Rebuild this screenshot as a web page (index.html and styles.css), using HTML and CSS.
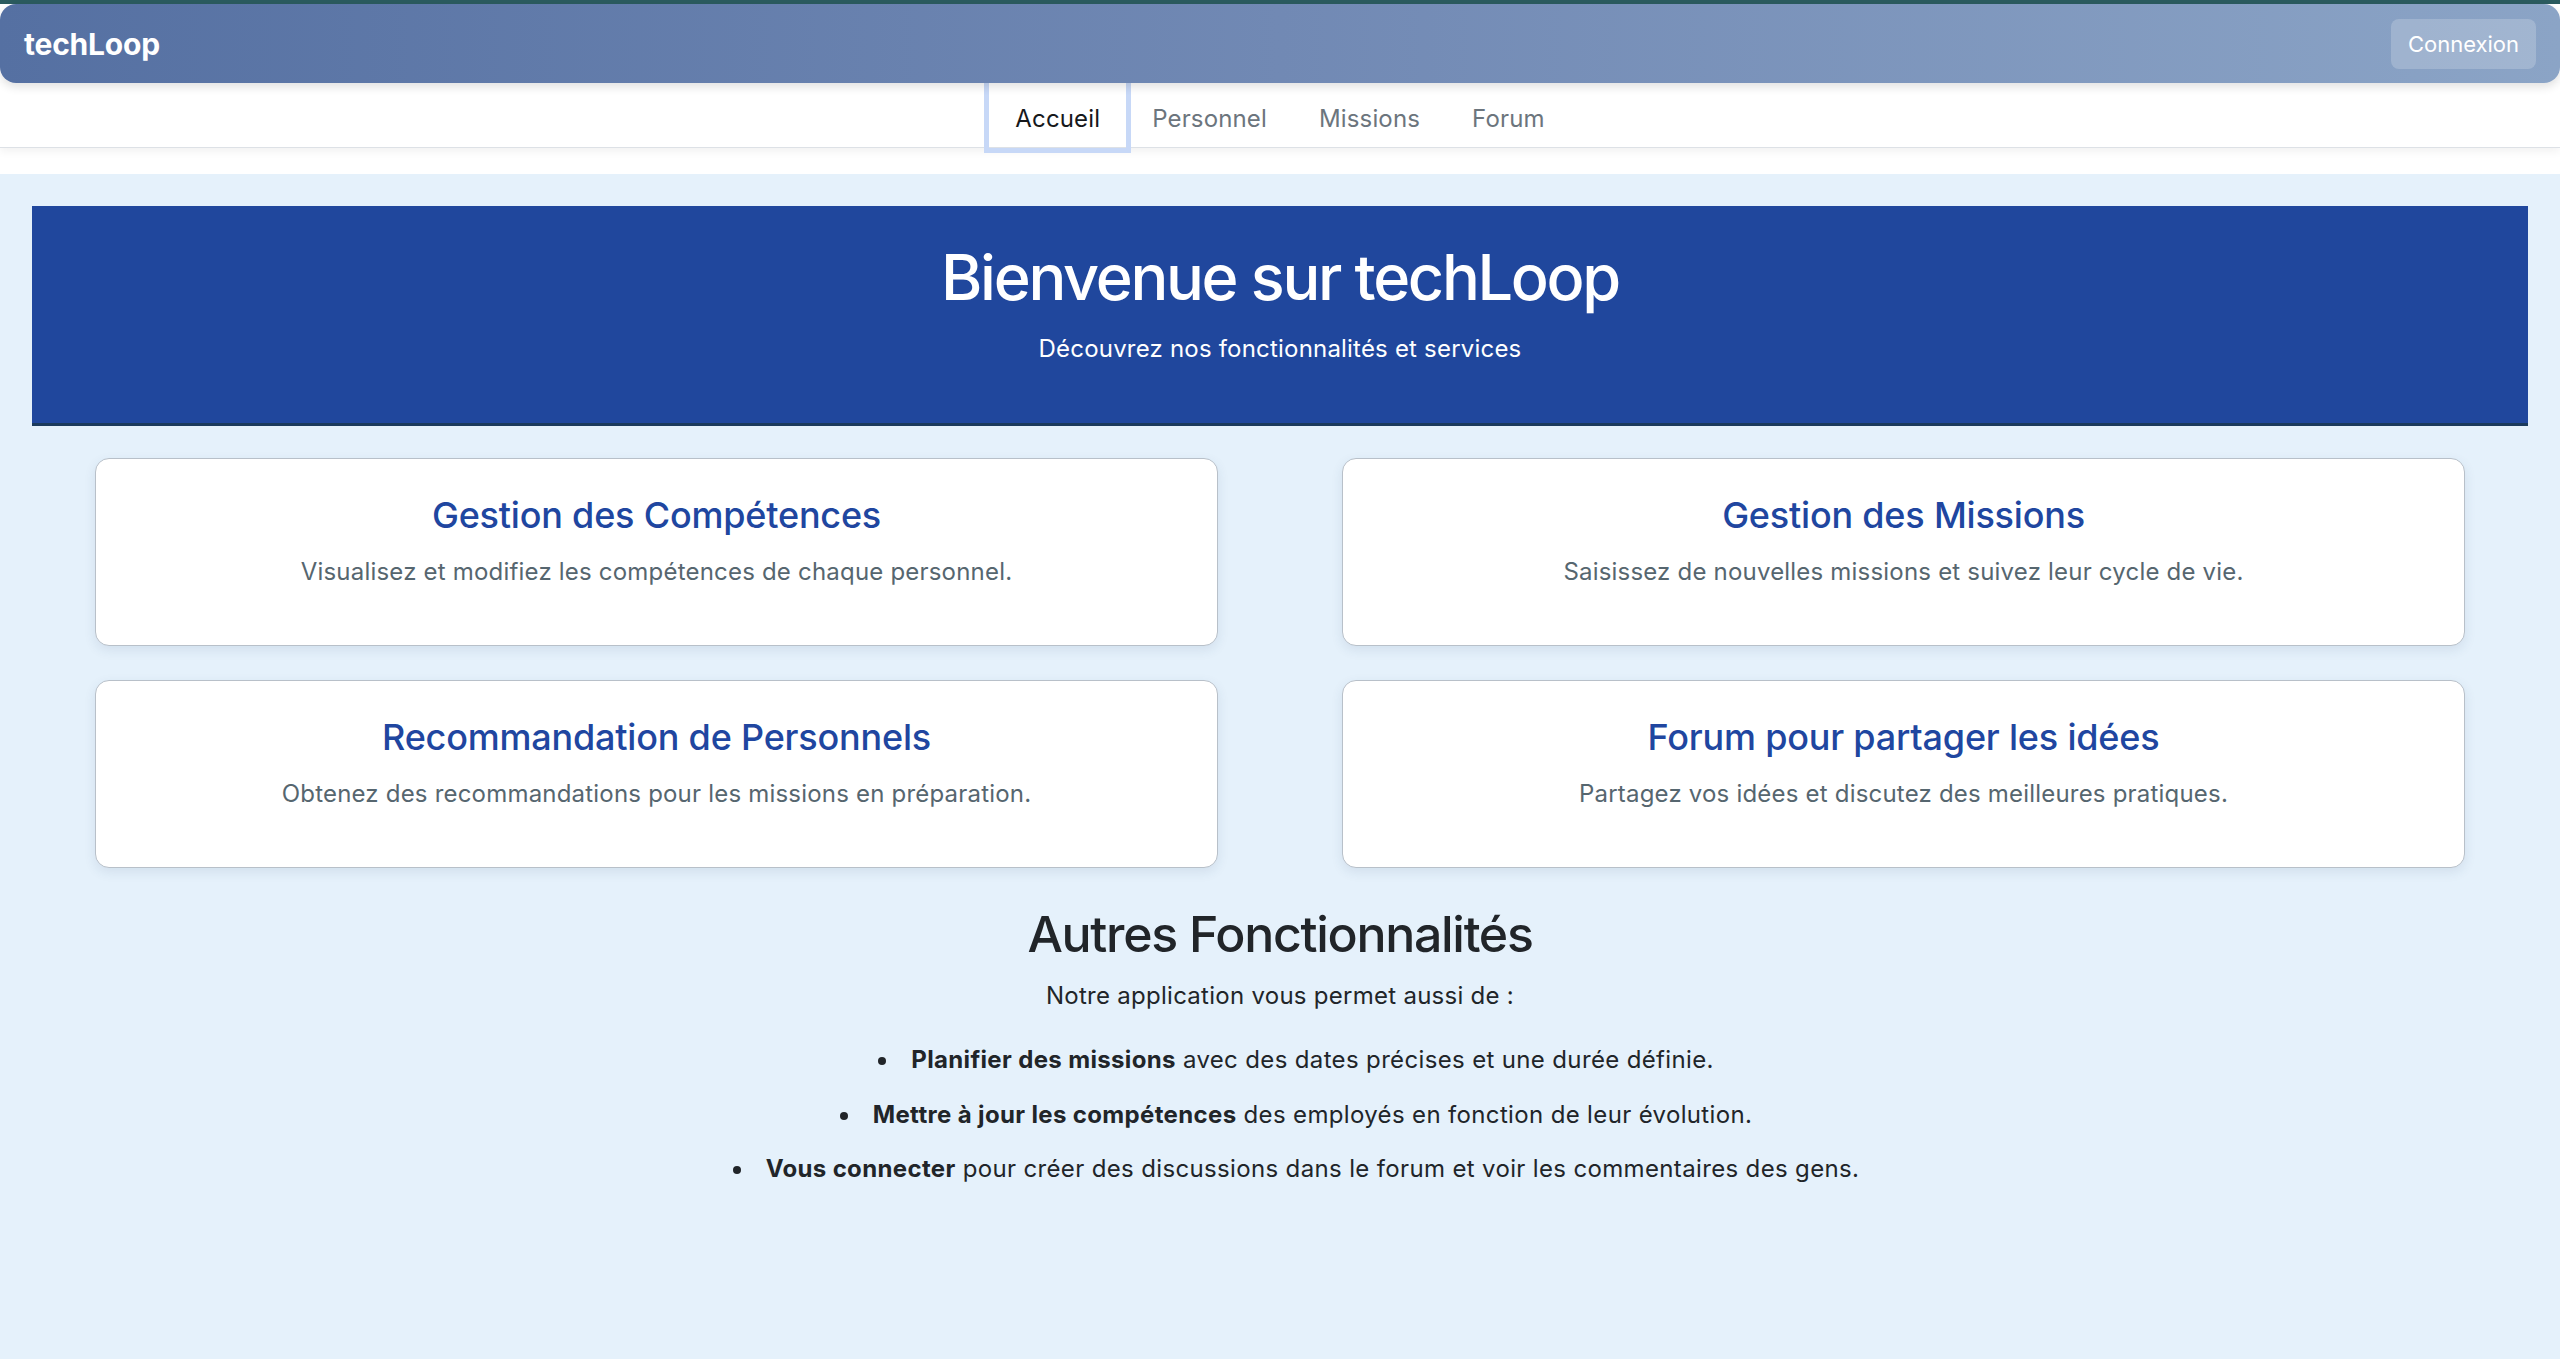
FILE: index.html
```html
<!DOCTYPE html>
<html lang="fr">
<head>
<meta charset="utf-8">
<title>techLoop</title>
<link rel="stylesheet" href="styles.css">
</head>
<body>
<div class="topline"></div>
<header class="navbar">
  <span class="brand">techLoop</span>
  <button class="login">Connexion</button>
</header>
<nav class="tabs">
  <a class="tab active" href="#">Accueil</a>
  <a class="tab" href="#">Personnel</a>
  <a class="tab" href="#">Missions</a>
  <a class="tab" href="#">Forum</a>
</nav>
<main class="main">
  <section class="hero">
    <h1 class="hero-title">Bienvenue sur techLoop</h1>
    <p class="hero-sub">Découvrez nos fonctionnalités et services</p>
  </section>
  <section class="cards">
    <div class="card">
      <h3 class="card-title">Gestion des Compétences</h3>
      <p class="card-text">Visualisez et modifiez les compétences de chaque personnel.</p>
    </div>
    <div class="card">
      <h3 class="card-title">Gestion des Missions</h3>
      <p class="card-text">Saisissez de nouvelles missions et suivez leur cycle de vie.</p>
    </div>
    <div class="card">
      <h3 class="card-title">Recommandation de Personnels</h3>
      <p class="card-text">Obtenez des recommandations pour les missions en préparation.</p>
    </div>
    <div class="card">
      <h3 class="card-title">Forum pour partager les idées</h3>
      <p class="card-text">Partagez vos idées et discutez des meilleures pratiques.</p>
    </div>
  </section>
  <section class="others">
    <h2 class="others-title">Autres Fonctionnalités</h2>
    <p class="others-intro">Notre application vous permet aussi de :</p>
    <ul class="others-list">
      <li><strong>Planifier des missions</strong> avec des dates précises et une durée définie.</li>
      <li><strong>Mettre à jour les compétences</strong> des employés en fonction de leur évolution.</li>
      <li><strong>Vous connecter</strong> pour créer des discussions dans le forum et voir les commentaires des gens.</li>
    </ul>
  </section>
</main>
</body>
</html>
```

FILE: styles.css
```css
* { box-sizing: border-box; }
html, body {
  margin: 0;
  padding: 0;
  background: #ffffff;
  font-family: Inter, "Noto Sans", "DejaVu Sans", sans-serif;
  color: #212529;
}
.topline {
  height: 4px;
  background: #2b5b5f;
}
.navbar {
  position: relative;
  z-index: 2;
  height: 79px;
  display: flex;
  align-items: center;
  justify-content: space-between;
  padding: 0 24px;
  border-radius: 16px;
  background: linear-gradient(90deg, #5570a2 0%, #7189b4 50%, #8ba4c6 100%);
  box-shadow: 0 4px 10px rgba(0, 0, 0, 0.12);
}
.brand {
  color: #ffffff;
  font-size: 30px;
  font-weight: 700;
  letter-spacing: -0.2px;
}
.login {
  height: 50px;
  padding: 0 17px;
  border: none;
  border-radius: 8px;
  background: rgba(255, 255, 255, 0.2);
  color: #ffffff;
  font-family: inherit;
  font-size: 22px;
}
.tabs {
  position: relative;
  z-index: 1;
  height: 65px;
  display: flex;
  justify-content: center;
  background: #ffffff;
  border-bottom: 1px solid #dde1e6;
  box-shadow: 0 4px 8px rgba(0, 0, 0, 0.05);
}
.tab {
  display: flex;
  align-items: center;
  height: 65px;
  padding: 5px 26px 0;
  font-size: 24px;
  color: #6c757d;
  text-decoration: none;
  letter-spacing: 0.15px;
}
.tab.active {
  color: #16181b;
  box-shadow: 0 0 0 5px #c7d8f7;
}
.main {
  margin-top: 26px;
  background: #e5f1fb;
  padding: 32px;
  min-height: calc(100vh - 175px);
}
.hero {
  height: 220px;
  padding: 34px 16px 0;
  background: #20479d;
  border-bottom: 3px solid #1b3a5c;
  text-align: center;
  color: #ffffff;
}
.hero-title {
  margin: 0;
  font-size: 63px;
  line-height: 1.2;
  font-weight: 500;
  letter-spacing: -2.3px;
}
.hero-sub {
  margin: 15px 0 0;
  font-size: 24px;
  line-height: 36px;
  letter-spacing: 0.2px;
}
.cards {
  display: grid;
  grid-template-columns: 1fr 1fr;
  column-gap: 124px;
  row-gap: 34px;
  margin-top: 32px;
  padding: 0 63px;
}
.card {
  height: 188px;
  padding: 35px 24px 0;
  background: #ffffff;
  border: 1px solid #b8c0c9;
  border-radius: 14px;
  box-shadow: 0 4px 12px rgba(40, 70, 110, 0.10);
  text-align: center;
}
.card-title {
  margin: 0;
  font-size: 36px;
  line-height: 1.2;
  font-weight: 500;
  color: #2046a0;
  letter-spacing: -0.2px;
}
.card-text {
  margin: 17px 0 0;
  font-size: 24px;
  line-height: 36px;
  color: #56666f;
  letter-spacing: 0.2px;
}
.others {
  text-align: center;
  margin-top: 36px;
}
.others-title {
  margin: 0;
  font-size: 50px;
  line-height: 1.2;
  font-weight: 500;
  color: #212529;
  letter-spacing: -1.3px;
}
.others-intro {
  margin: 14px 0 0;
  font-size: 24px;
  line-height: 36px;
  letter-spacing: 0.27px;
}
.others-list {
  margin: 28px 0 0;
  padding: 0 0 0 32px;
  list-style-position: inside;
  font-size: 24px;
  line-height: 36px;
  letter-spacing: 0.35px;
}
.others-list li + li {
  margin-top: 18.5px;
}
.others-list strong {
  font-weight: 700;
}
```
